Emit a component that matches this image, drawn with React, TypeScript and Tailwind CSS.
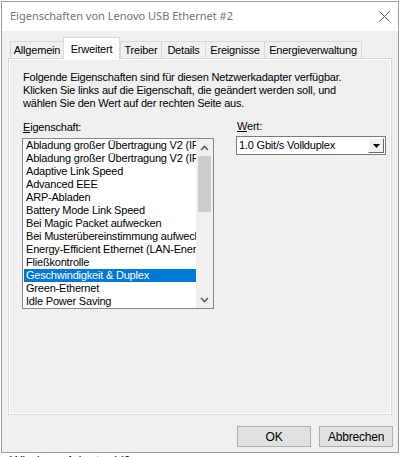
import React from 'react';

const tabs = [
  { label: 'Allgemein', w: 'w-[54px]' },
  { label: 'Erweitert', w: 'w-[57px]', active: true },
  { label: 'Treiber', w: 'w-[42px]' },
  { label: 'Details', w: 'w-[45px]' },
  { label: 'Ereignisse', w: 'w-[60px]' },
  { label: 'Energieverwaltung', w: 'w-[98px]' },
];

const properties = [
  'Abladung großer Übertragung V2 (IPv4)',
  'Abladung großer Übertragung V2 (IPv6)',
  'Adaptive Link Speed',
  'Advanced EEE',
  'ARP-Abladen',
  'Battery Mode Link Speed',
  'Bei Magic Packet aufwecken',
  'Bei Musterübereinstimmung aufwecken',
  'Energy-Efficient Ethernet (LAN-Energiesparmodus)',
  'Fließkontrolle',
  'Geschwindigkeit & Duplex',
  'Green-Ethernet',
  'Idle Power Saving',
];

const SELECTED = 'Geschwindigkeit & Duplex';

function Chevron({ up }: { up?: boolean }) {
  return (
    <svg width="9" height="6" viewBox="0 0 9 6">
      <polyline
        points={up ? '1,5 4.5,1.5 8,5' : '1,1 4.5,4.5 8,1'}
        fill="none"
        stroke="#606060"
        strokeWidth="1.6"
      />
    </svg>
  );
}

function PropertyList() {
  return (
    <div className="flex h-[171px] w-[192px] border border-[#828790] bg-white">
      <div className="flex-1 overflow-hidden">
        {properties.map((p) => (
          <div
            key={p}
            className={
              p === SELECTED
                ? 'ml-px h-[13px] whitespace-nowrap bg-[#0078d7] pl-[2px] leading-[13px] text-white'
                : 'ml-px h-[13px] whitespace-nowrap pl-[2px] leading-[13px] text-black'
            }
          >
            {p}
          </div>
        ))}
      </div>
      {/* scrollbar */}
      <div className="flex w-[17px] flex-col items-center bg-[#f0f0f0]">
        <div className="flex h-[17px] items-center justify-center">
          <Chevron up />
        </div>
        <div className="h-[56px] w-[13px] bg-[#cdcdcd]" />
        <div className="flex-1" />
        <div className="flex h-[17px] items-center justify-center">
          <Chevron />
        </div>
      </div>
    </div>
  );
}

function ValueSelect() {
  return (
    <div className="flex h-[19px] w-[150px] items-center border border-[#7a7a7a] bg-white p-px">
      <span className="flex-1 pl-px leading-[15px]">1.0 Gbit/s Vollduplex</span>
      <div className="flex h-[15px] w-[16px] items-center justify-center border-t border-l border-b border-r border-t-white border-l-white border-r-[#696969] border-b-[#696969] bg-[#f0f0f0]">
        <svg width="7" height="4" viewBox="0 0 7 4">
          <polygon points="0,0 7,0 3.5,4" fill="#000" />
        </svg>
      </div>
    </div>
  );
}

export default function App() {
  return (
    <div className="h-[457px] w-[399px] overflow-hidden bg-white pt-px">
      <div
        className="ml-px flex h-[452px] w-[398px] flex-col border border-[#9a9a9a] bg-[#f0f0f0] text-[11px] tracking-[-0.2px] text-black"
        style={{ fontFamily: '"Liberation Sans", Arial, sans-serif' }}
      >
        {/* title bar */}
        <div className="flex h-[29px] items-center justify-between bg-white pl-[8px] pr-[8px]">
          <span
            className="text-[11px] tracking-normal text-[#737373]"
            style={{ fontFamily: '"Noto Sans", "Open Sans", sans-serif' }}
          >
            Eigenschaften von Lenovo USB Ethernet #2
          </span>
          <svg width="11" height="11" viewBox="0 0 11 11">
            <path d="M0.5 0.5 L10.5 10.5 M10.5 0.5 L0.5 10.5" stroke="#5a5a5a" strokeWidth="1" />
          </svg>
        </div>

        {/* tabs */}
        <div className="ml-[8px] mt-[6px] flex h-[22px] items-end">
          {tabs.map((t) =>
            t.active ? (
              <div
                key={t.label}
                className={`relative z-10 flex h-[22px] ${t.w} items-start justify-center border-l border-r border-t border-[#d9d9d9] bg-white pt-[3px]`}
              >
                {t.label}
              </div>
            ) : (
              <div
                key={t.label}
                className={`flex h-[18px] ${t.w} items-center justify-center border-l border-t border-r border-[#d9d9d9] bg-[#f0f0f0] -mr-px`}
              >
                {t.label}
              </div>
            )
          )}
        </div>

        {/* tab panel */}
        <div className="-mt-px ml-[6px] h-[357px] w-[384px] border border-[#d9d9d9] bg-[#f0f0f0] pl-[13px] pt-[12px] shadow-[inset_0_0_0_1px_#ffffff]">
          <div className="pl-px leading-[13px]">
            <div>Folgende Eigenschaften sind für diesen Netzwerkadapter verfügbar.</div>
            <div>Klicken Sie links auf die Eigenschaft, die geändert werden soll, und</div>
            <div>wählen Sie den Wert auf der rechten Seite aus.</div>
          </div>
          <div className="mt-[11px] flex gap-[22px]">
            <div>
              <div className="mb-[4px] pl-px leading-[13px]">
                <span className="underline underline-offset-1">E</span>igenschaft:
              </div>
              <PropertyList />
            </div>
            <div>
              <div className="mb-[3px] -mt-px pl-px leading-[13px]">
                <span className="underline underline-offset-1">W</span>ert:
              </div>
              <ValueSelect />
            </div>
          </div>
        </div>

        {/* buttons */}
        <div className="mr-[5px] mt-[11px] flex justify-end gap-[8px]">
          <button className="h-[21px] w-[74px] border border-[#adadad] bg-[#e1e1e1] text-[12px] tracking-[-0.2px]">
            OK
          </button>
          <button className="h-[21px] w-[74px] border border-[#adadad] bg-[#e1e1e1] text-[12px] tracking-[-0.2px]">
            Abbrechen
          </button>
        </div>
      </div>
      <div
        className="mt-[1px] pl-[10px] text-[13px] leading-[13px] text-[#1a1a1a]"
        style={{ fontFamily: '"Liberation Sans", Arial, sans-serif' }}
      >
        Windows Adapter V2
      </div>
    </div>
  );
}
